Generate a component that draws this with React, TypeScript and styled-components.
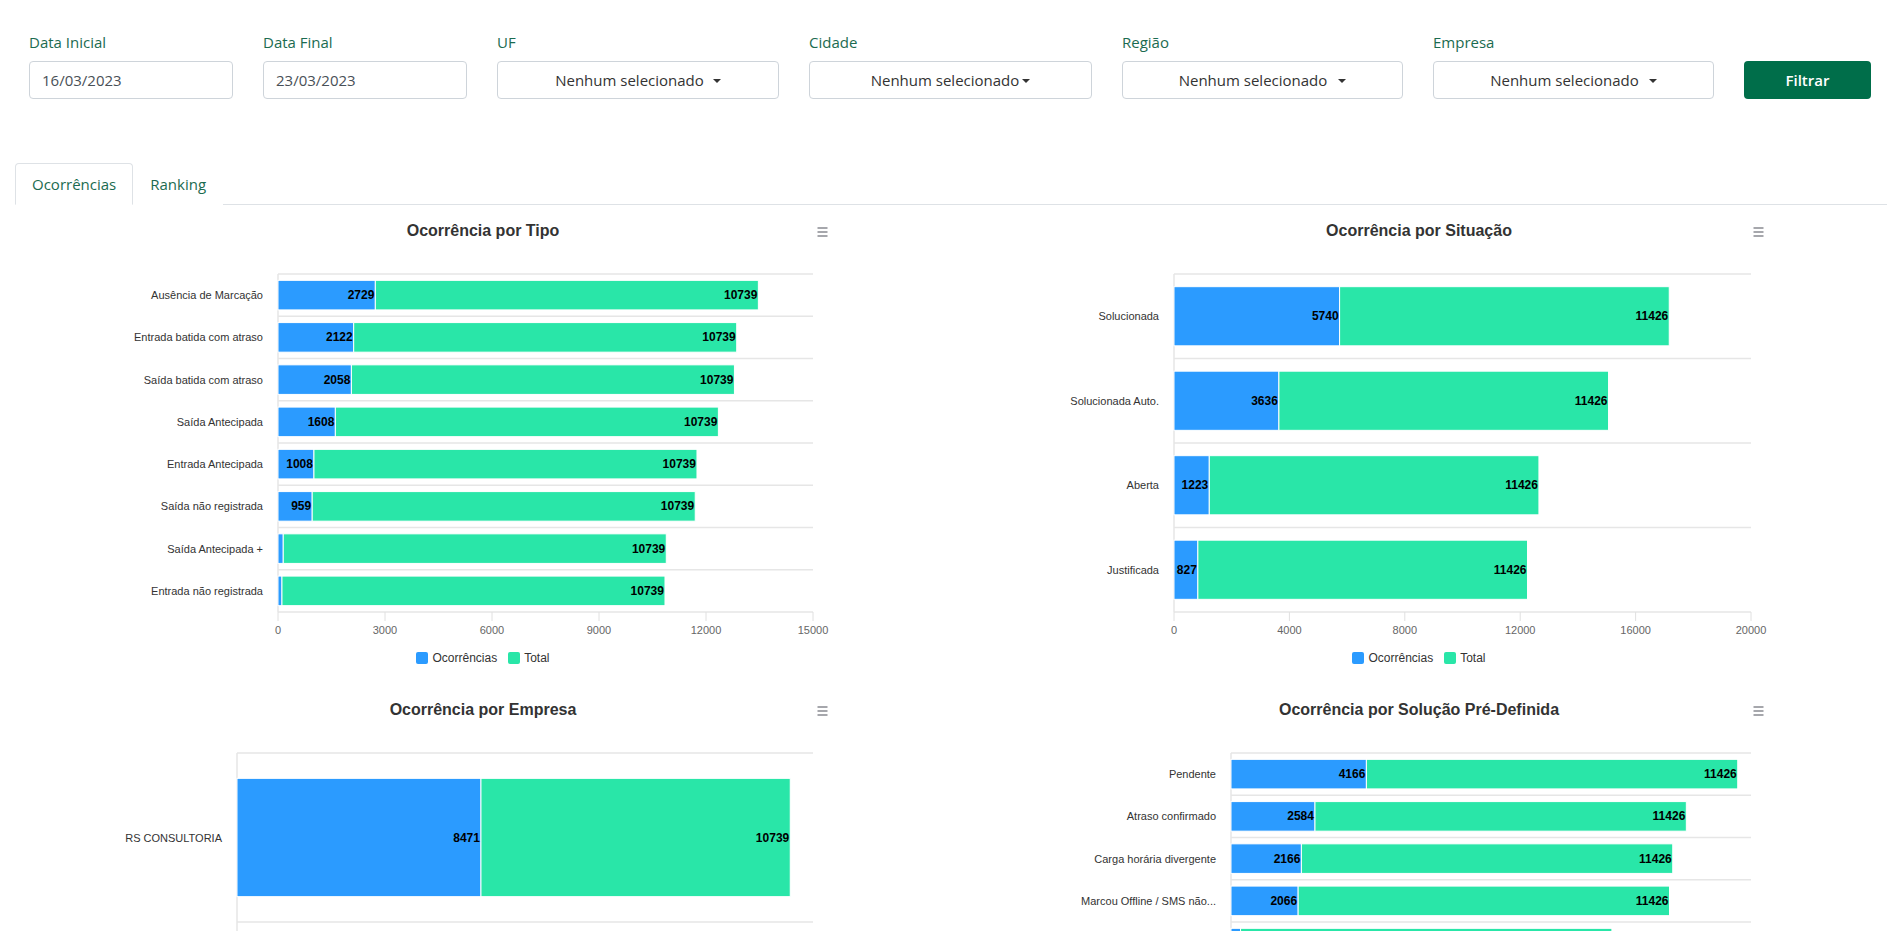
import React from 'react';
import styled, { createGlobalStyle } from 'styled-components';

const BLUE = '#2b9bff';
const GREEN = '#29e6a8';

const GlobalStyle = createGlobalStyle`
  * { box-sizing: border-box; }
  html, body { scrollbar-width: none; }
  body::-webkit-scrollbar { display: none; }
  body {
    margin: 0;
    background: #ffffff;
    font-family: "Open Sans", "Noto Sans", sans-serif;
  }
`;

const Page = styled.div`
  padding: 31px 15px 0;
`;

const FilterRow = styled.div`
  display: flex;
  align-items: flex-end;
  gap: 30px;
  padding-left: 14px;
`;

const Field = styled.div<{ $w: number }>`
  width: ${(p) => p.$w}px;
  display: flex;
  flex-direction: column;
  gap: 8px;
`;

const Label = styled.label`
  font-size: 15px;
  line-height: 22px;
  color: #1b6b50;
`;

const DateInput = styled.input`
  height: 38px;
  width: 100%;
  border: 1px solid #ced4da;
  border-radius: 4px;
  padding: 0 12px;
  font-family: "Open Sans", "Noto Sans", sans-serif;
  font-size: 15px;
  color: #495057;
  background: #fff;
  outline: none;
`;

const SelectButton = styled.button<{ $gap: number }>`
  height: 38px;
  width: 100%;
  border: 1px solid #ced4da;
  border-radius: 4px;
  background: #fff;
  display: flex;
  align-items: center;
  justify-content: center;
  gap: ${(p) => p.$gap}px;
  font-family: "Open Sans", "Noto Sans", sans-serif;
  font-size: 15px;
  color: #333;
  padding: 0 12px;
  cursor: pointer;
`;

const Caret = styled.span`
  width: 0;
  height: 0;
  border-top: 4px solid #333;
  border-left: 4px solid transparent;
  border-right: 4px solid transparent;
  margin-top: 1px;
`;

const FilterButton = styled.button`
  width: 127px;
  height: 38px;
  border: none;
  border-radius: 4px;
  background: #006e4a;
  color: #ffffff;
  font-family: "Open Sans", "Noto Sans", sans-serif;
  font-size: 15px;
  font-weight: 600;
  cursor: pointer;
`;

const TabBar = styled.div`
  margin-top: 64px;
  display: flex;
  border-bottom: 1px solid #dee2e6;
`;

const Tab = styled.div<{ $active?: boolean }>`
  height: 42px;
  margin-bottom: -1px;
  padding: 0 16px;
  display: flex;
  align-items: center;
  font-size: 15px;
  color: #1b6b50;
  border: 1px solid ${(p) => (p.$active ? '#dee2e6' : 'transparent')};
  border-bottom-color: ${(p) => (p.$active ? '#ffffff' : 'transparent')};
  border-radius: 4px 4px 0 0;
  background: #fff;
  cursor: pointer;
`;

const ChartsGrid = styled.div`
  display: grid;
  grid-template-columns: 1fr 1fr;
`;

const ChartCard = styled.div`
  position: relative;
  display: flex;
  flex-direction: column;
  padding-bottom: 10px;
`;

const ChartHeader = styled.div`
  height: 52px;
  display: flex;
  align-items: center;
  justify-content: center;
`;

const ChartTitle = styled.h3`
  margin: 0;
  font-family: "Liberation Sans", Arial, sans-serif;
  font-size: 16px;
  font-weight: 700;
  color: #333333;
`;

const MenuButton = styled.button`
  position: absolute;
  left: 797px;
  top: 19px;
  width: 20px;
  height: 16px;
  padding: 0;
  border: none;
  background: transparent;
  display: flex;
  align-items: center;
  justify-content: center;
  cursor: pointer;
`;

const PlotSvg = styled.svg`
  display: block;
  font-family: "Liberation Sans", Arial, sans-serif;

  .grid { stroke: #e6e6e6; stroke-width: 1.5; }
  .tick { stroke: #e0e0e0; stroke-width: 1; }
  .cat { font-size: 11px; fill: #333333; }
  .axis { font-size: 11px; fill: #666666; }
  .value { font-size: 12px; font-weight: 700; fill: #000000; }
  .bar { stroke: #ffffff; stroke-width: 1; }
`;

const Legend = styled.div`
  height: 32px;
  display: flex;
  align-items: center;
  justify-content: center;
  gap: 11px;
`;

const LegendItem = styled.div`
  display: flex;
  align-items: center;
  gap: 4px;
  font-family: "Liberation Sans", Arial, sans-serif;
  font-size: 12px;
  color: #333333;
`;

const Swatch = styled.span<{ $color: string }>`
  width: 12px;
  height: 12px;
  border-radius: 2px;
  background: ${(p) => p.$color};
`;

type Row = { label: string; a: number; b: number; hideA?: boolean; hideB?: boolean };

type ChartProps = {
  title: string;
  rows: Row[];
  slots: number;
  max: number;
  step: number;
  plotLeft: number;
  plotRight: number;
};

const MenuIcon = () => (
  <svg width="11" height="10" viewBox="0 0 11 10">
    <g stroke="#888a90" strokeWidth="1.5">
      <line x1="0.5" y1="1" x2="10.5" y2="1" />
      <line x1="0.5" y1="5" x2="10.5" y2="5" />
      <line x1="0.5" y1="9" x2="10.5" y2="9" />
    </g>
  </svg>
);

function BarChart({ title, rows, slots, max, step, plotLeft, plotRight }: ChartProps) {
  const top = 17;
  const bottom = 355;
  const catH = (bottom - top) / slots;
  const scale = (plotRight - plotLeft) / max;
  const ticks: number[] = [];
  for (let v = 0; v <= max; v += step) ticks.push(v);
  const gridYs: number[] = [];
  for (let i = 0; i <= slots; i++) gridYs.push(top + i * catH);

  return (
    <ChartCard>
      <ChartHeader>
        <ChartTitle>{title}</ChartTitle>
      </ChartHeader>
      <MenuButton aria-label="menu">
        <MenuIcon />
      </MenuButton>
      <PlotSvg width="936" height="385" viewBox="0 0 936 385">
        {gridYs.map((y, i) => (
          <line key={i} className="grid" x1={plotLeft} x2={plotRight} y1={y} y2={y} />
        ))}
        <line className="grid" x1={plotLeft} x2={plotLeft} y1={top} y2={bottom} />
        {ticks.map((v) => {
          const x = plotLeft + v * scale;
          return <line key={v} className="tick" x1={x} x2={x} y1={bottom} y2={bottom + 9} />;
        })}
        {rows.map((r, i) => {
          const cy = top + (i + 0.5) * catH;
          const bh = catH * 0.7;
          const y0 = cy - bh / 2;
          const xa = plotLeft + r.a * scale;
          const xb = plotLeft + (r.a + r.b) * scale;
          return (
            <g key={i}>
              <rect className="bar" x={plotLeft} y={y0} width={xa - plotLeft} height={bh} fill={BLUE} />
              <rect className="bar" x={xa} y={y0} width={xb - xa} height={bh} fill={GREEN} />
              {!r.hideA && (
                <text className="value" x={xa - 1} y={cy + 4} textAnchor="end">
                  {r.a}
                </text>
              )}
              {!r.hideB && (
                <text className="value" x={xb - 1} y={cy + 4} textAnchor="end">
                  {r.b}
                </text>
              )}
              {r.label && (
                <text className="cat" x={plotLeft - 15} y={cy + 4} textAnchor="end">
                  {r.label}
                </text>
              )}
            </g>
          );
        })}
        {ticks.map((v) => (
          <text key={v} className="axis" x={plotLeft + v * scale} y={377} textAnchor="middle">
            {v}
          </text>
        ))}
      </PlotSvg>
      <Legend>
        <LegendItem>
          <Swatch $color={BLUE} />
          Ocorrências
        </LegendItem>
        <LegendItem>
          <Swatch $color={GREEN} />
          Total
        </LegendItem>
      </Legend>
    </ChartCard>
  );
}

const tipoRows: Row[] = [
  { label: 'Ausência de Marcação', a: 2729, b: 10739 },
  { label: 'Entrada batida com atraso', a: 2122, b: 10739 },
  { label: 'Saída batida com atraso', a: 2058, b: 10739 },
  { label: 'Saída Antecipada', a: 1608, b: 10739 },
  { label: 'Entrada Antecipada', a: 1008, b: 10739 },
  { label: 'Saída não registrada', a: 959, b: 10739 },
  { label: 'Saída Antecipada +', a: 147, b: 10739, hideA: true },
  { label: 'Entrada não registrada', a: 111, b: 10739, hideA: true },
];

const situacaoRows: Row[] = [
  { label: 'Solucionada', a: 5740, b: 11426 },
  { label: 'Solucionada Auto.', a: 3636, b: 11426 },
  { label: 'Aberta', a: 1223, b: 11426 },
  { label: 'Justificada', a: 827, b: 11426 },
];

const empresaRows: Row[] = [{ label: 'RS CONSULTORIA', a: 8471, b: 10739 }];

const soluçãoRows: Row[] = [
  { label: 'Pendente', a: 4166, b: 11426 },
  { label: 'Atraso confirmado', a: 2584, b: 11426 },
  { label: 'Carga horária divergente', a: 2166, b: 11426 },
  { label: 'Marcou Offline / SMS não...', a: 2066, b: 11426 },
  { label: '', a: 294, b: 11426, hideA: true },
];

const selects = [
  { label: 'UF', w: 282, gap: 9 },
  { label: 'Cidade', w: 283, gap: 3 },
  { label: 'Região', w: 281, gap: 11 },
  { label: 'Empresa', w: 281, gap: 10 },
];

export default function App() {
  return (
    <>
      <GlobalStyle />
      <Page>
        <FilterRow>
          <Field $w={204}>
            <Label>Data Inicial</Label>
            <DateInput readOnly value="16/03/2023" />
          </Field>
          <Field $w={204}>
            <Label>Data Final</Label>
            <DateInput readOnly value="23/03/2023" />
          </Field>
          {selects.map((s) => (
            <Field key={s.label} $w={s.w}>
              <Label>{s.label}</Label>
              <SelectButton $gap={s.gap}>
                Nenhum selecionado
                <Caret />
              </SelectButton>
            </Field>
          ))}
          <FilterButton>Filtrar</FilterButton>
        </FilterRow>

        <TabBar>
          <Tab $active>Ocorrências</Tab>
          <Tab>Ranking</Tab>
        </TabBar>

        <ChartsGrid>
          <BarChart title="Ocorrência por Tipo" rows={tipoRows} slots={8} max={15000} step={3000} plotLeft={263} plotRight={798} />
          <BarChart title="Ocorrência por Situação" rows={situacaoRows} slots={4} max={20000} step={4000} plotLeft={223} plotRight={800} />
          <BarChart title="Ocorrência por Empresa" rows={empresaRows} slots={2} max={20000} step={4000} plotLeft={222} plotRight={798} />
          <BarChart title="Ocorrência por Solução Pré-Definida" rows={soluçãoRows} slots={8} max={16000} step={4000} plotLeft={280} plotRight={800} />
        </ChartsGrid>
      </Page>
    </>
  );
}
